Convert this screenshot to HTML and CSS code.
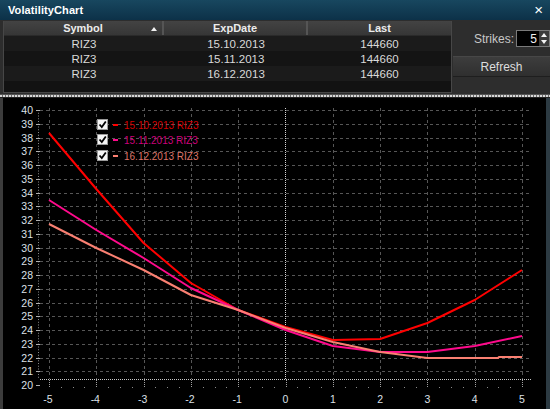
FILE: index.html
```html
<!DOCTYPE html>
<html>
<head>
<meta charset="utf-8">
<link rel="stylesheet" href="styles.css">
</head>
<body>
<div class="window">
  <div class="titlebar">
    <span class="title">VolatilityChart</span>
    <span class="close">×</span>
  </div>
  <div class="top">
    <div class="grid">
      <div class="row head">
        <div class="cell c1">Symbol<span class="sort"></span></div>
        <div class="cell c2">ExpDate</div>
        <div class="cell c3">Last</div>
      </div>
      <div class="row odd">
        <div class="cell c1">RIZ3</div>
        <div class="cell c2">15.10.2013</div>
        <div class="cell c3">144660</div>
      </div>
      <div class="row even">
        <div class="cell c1">RIZ3</div>
        <div class="cell c2">15.11.2013</div>
        <div class="cell c3">144660</div>
      </div>
      <div class="row odd">
        <div class="cell c1">RIZ3</div>
        <div class="cell c2">16.12.2013</div>
        <div class="cell c3">144660</div>
      </div>
    </div>
    <div class="side">
      <div class="strikes">
        <span class="label">Strikes:</span>
        <div class="spin">
          <span class="val">5</span>
          <div class="arrows">
            <span class="up"></span>
            <span class="down"></span>
          </div>
        </div>
      </div>
      <div class="button">Refresh</div>
    </div>
  </div>
  <div class="splitter"></div>
  <div class="chart">
    <svg class="plot" width="543" height="311" viewBox="3 98 543 311" xmlns="http://www.w3.org/2000/svg">
      <rect x="3" y="98" width="543" height="311" fill="#000"/>
      <g id="grid" stroke="#565656" stroke-width="1" stroke-dasharray="3 3"></g>
      <g id="axes"></g>
      <g id="labels" font-family="Liberation Sans, Arial, sans-serif" font-size="10.5" fill="#dde1e8"></g>
      <g id="curves" fill="none" stroke-width="2" stroke-linejoin="round"></g>
      <g class="legend" font-family="Liberation Sans, Arial, sans-serif" font-size="10">
        <g>
          <rect x="97.5" y="119.5" width="10" height="10" fill="#f4f4f4" stroke="#9a9a9a"/>
          <path d="M99.5 124.5 L101.8 127 L105.8 121.5" fill="none" stroke="#000" stroke-width="1.8"/>
          <line x1="113" y1="125" x2="118" y2="125" stroke="#ff0000" stroke-width="2"/>
          <text x="124" y="128.5" fill="#d40000">15.10.2013 RIZ3</text>
        </g>
        <g>
          <rect x="97.5" y="134.5" width="10" height="10" fill="#f4f4f4" stroke="#9a9a9a"/>
          <path d="M99.5 139.5 L101.8 142 L105.8 136.5" fill="none" stroke="#000" stroke-width="1.8"/>
          <line x1="113" y1="140" x2="118" y2="140" stroke="#ff0a8c" stroke-width="2"/>
          <text x="124" y="143.5" fill="#cc007a">15.11.2013 RIZ3</text>
        </g>
        <g>
          <rect x="97.5" y="150.5" width="10" height="10" fill="#f4f4f4" stroke="#9a9a9a"/>
          <path d="M99.5 155.5 L101.8 158 L105.8 152.5" fill="none" stroke="#000" stroke-width="1.8"/>
          <line x1="113" y1="156" x2="118" y2="156" stroke="#fa8072" stroke-width="2"/>
          <text x="124" y="159.5" fill="#dd7468">16.12.2013 RIZ3</text>
        </g>
      </g>
    </svg>
  </div>
</div>
<script src="chart.js"></script>
</body>
</html>
```

FILE: chart.js
```javascript
(function () {
  var NS = "http://www.w3.org/2000/svg";
  function X(v) { return 285.5 + v * 47.3; }
  function Y(v) { return 110 + (40 - v) * 13.75; }
  function el(parent, name, attrs, text) {
    var e = document.createElementNS(NS, name);
    for (var k in attrs) e.setAttribute(k, attrs[k]);
    if (text !== undefined) e.textContent = text;
    parent.appendChild(e);
    return e;
  }
  var grid = document.getElementById("grid");
  var axes = document.getElementById("axes");
  var labels = document.getElementById("labels");
  var curves = document.getElementById("curves");

  for (var v = 21; v <= 40; v++) {
    var y = Math.round(Y(v)) + 0.5;
    el(grid, "line", { x1: 40, y1: y, x2: 531, y2: y });
  }
  for (var x = -5; x <= 5; x++) {
    if (x === 0) continue;
    var xx = Math.round(X(x)) + 0.5;
    el(grid, "line", { x1: xx, y1: 108, x2: xx, y2: 379 });
  }
  // zero line
  el(axes, "line", { x1: 285.5, y1: 108, x2: 285.5, y2: 379, stroke: "#d4d4d4", "stroke-dasharray": "1 1" });
  // y axis dotted line + ticks
  el(axes, "line", { x1: 38.5, y1: 110, x2: 38.5, y2: 379, stroke: "#8a8a8a", "stroke-dasharray": "1 1.75" });
  for (var v2 = 20; v2 <= 40; v2++) {
    var ty = Math.round(Y(v2)) + 0.5;
    el(axes, "line", { x1: 36, y1: ty, x2: 40, y2: ty, stroke: "#b0b0b0" });
    el(labels, "text", { x: 33, y: Y(v2) + 4, "text-anchor": "end" }, String(v2));
  }
  // x axis dotted line
  el(axes, "line", { x1: 40, y1: 379.5, x2: 531, y2: 379.5, stroke: "#c8c8c8", "stroke-dasharray": "1 1" });
  for (var m = -5; m <= 5.001; m += 0.25) {
    var mx = Math.round(X(m)) + 0.5;
    var major = Math.abs(m - Math.round(m)) < 0.01;
    if (major) {
      el(axes, "line", { x1: mx, y1: 380, x2: mx, y2: 388, stroke: "#a0a0a0", "stroke-dasharray": "1 1" });
    } else {
      el(axes, "rect", { x: mx - 0.5, y: 387, width: 1, height: 1, fill: "#8a8a8a" });
    }
  }
  for (var x2 = -5; x2 <= 5; x2++) {
    el(labels, "text", { x: X(x2) + (x2 < 0 ? -1 : 0), y: 403, "text-anchor": "middle" }, String(x2));
  }

  var xs = [-5, -4, -3, -2, -1, 0, 1, 2, 3, 4, 5];
  function pts(ys) {
    return ys.map(function (y, i) { return X(xs[i]).toFixed(1) + "," + y; }).join(" ");
  }
  var red = [133, 189, 243, 283, 310, 327, 340, 339, 323, 300, 270];
  var mag = [200, 230, 258, 288, 310, 330, 346, 352, 352, 346, 336];
  el(curves, "polyline", { points: pts(red), stroke: "#ff0000" });
  el(curves, "polyline", { points: pts(mag), stroke: "#ff0a8c" });
  var sal = "49,224 96.3,248 143.6,270 190.9,295 238.2,310 285.5,328 332.8,342 380.1,352 427.4,358 498,358 499,357 522,357";
  el(curves, "polyline", { points: sal, stroke: "#fa8072" });
})();
```

FILE: styles.css
```css
* { box-sizing: border-box; }
html, body {
  margin: 0;
  padding: 0;
  background: #2b2b2b;
  overflow: hidden;
}
.window {
  width: 550px;
  height: 409px;
  display: flex;
  flex-direction: column;
  background: #2d2d2d;
  font-family: "Liberation Sans", Arial, sans-serif;
}
.titlebar {
  height: 20px;
  flex: none;
  display: flex;
  align-items: center;
  justify-content: space-between;
  padding: 0 8px 0 8px;
  background: linear-gradient(#18475f, #0c3148);
  color: #fff;
}
.title {
  font-weight: bold;
  font-size: 11px;
  letter-spacing: 0.1px;
}
.close {
  font-size: 15px;
  line-height: 1;
  margin-right: -1px;
  margin-top: -1px;
}
.top {
  height: 74px;
  flex: none;
  display: flex;
  padding: 1px 0 0 3px;
  background: #2d2d2d;
}
.grid {
  width: 449px;
  height: 72px;
  background: #121212;
  border: 1px solid #474747;
  border-top: 0;
  display: flex;
  flex-direction: column;
}
.row {
  display: flex;
  height: 15px;
  flex: none;
}
.cell {
  display: flex;
  align-items: center;
  justify-content: center;
  color: #dadada;
  font-size: 11.5px;
  position: relative;
}
.c1 { width: 160px; }
.c2 { width: 144px; }
.c3 { flex: 1; }
.head {
  background: linear-gradient(#434343, #363636);
  border-bottom: 1px solid #2a2a2a;
}
.head .cell {
  font-weight: bold;
  font-size: 11px;
  color: #ececec;
}
.head .c1, .head .c2 {
  border-right: 2px solid #555;
}
.sort {
  position: absolute;
  right: 5px;
  top: 6px;
  width: 0;
  height: 0;
  border-left: 3.5px solid transparent;
  border-right: 3.5px solid transparent;
  border-bottom: 4px solid #f0f0f0;
}
.odd { background: #1b1b1b; }
.even { background: #141414; }
.side {
  flex: 1;
  display: flex;
  flex-direction: column;
  padding-top: 9px;
  margin-left: 1px;
}
.strikes {
  display: flex;
  align-items: center;
  justify-content: flex-end;
  height: 17px;
  gap: 2px;
}
.label {
  color: #c8c8c8;
  font-size: 12px;
}
.spin {
  width: 34px;
  height: 17px;
  background: #000;
  border: 1px solid #7a7a7a;
  display: flex;
  align-items: center;
}
.val {
  flex: 1;
  text-align: right;
  color: #f0f0f0;
  font-size: 12px;
  padding-right: 2px;
}
.arrows {
  width: 10px;
  height: 15px;
  display: flex;
  flex-direction: column;
  justify-content: space-around;
  align-items: center;
  background: #3a3a3a;
}
.up, .down {
  width: 0;
  height: 0;
  border-left: 3.5px solid transparent;
  border-right: 3.5px solid transparent;
}
.up { border-bottom: 4px solid #f4f4f4; }
.down { border-top: 4px solid #f4f4f4; }
.button {
  margin-top: 9px;
  height: 21px;
  display: flex;
  align-items: center;
  justify-content: center;
  background: linear-gradient(#3d3d3d, #2f2f2f);
  border-top: 1px solid #474747;
  border-bottom: 1px solid #1e1e1e;
  color: #dedede;
  font-size: 12px;
}
.splitter {
  height: 4px;
  flex: none;
  background: #3a3a3a;
  border-top: 1px solid #555;
  border-bottom: 1px solid #222;
  background-image: repeating-linear-gradient(90deg, #d8d8d8 0 2px, #6a6a6a 2px 3px);
}
.chart {
  flex: 1;
  display: flex;
  border-left: 3px solid #3c3c3c;
  border-right: 4px solid #2c3a42;
  background: #000;
}
.plot {
  display: block;
}
```
